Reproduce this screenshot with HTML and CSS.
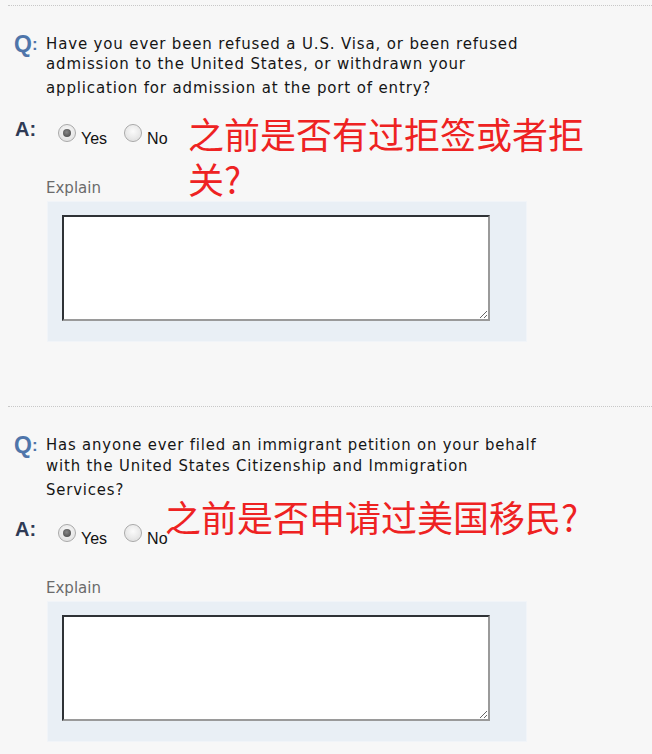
FILE: index.html
```html
<!DOCTYPE html>
<html>
<head>
<meta charset="utf-8">
<link rel="stylesheet" href="styles.css">
</head>
<body>
<div class="section">
  <div class="qrow">
    <div class="qlabel">Q<span class="colon">:</span></div>
    <div class="qtext v1">
      <span class="ln">Have you ever been refused a U.S. Visa, or been refused</span>
      <span class="ln">admission to the United States, or withdrawn your</span>
      <span class="ln last">application for admission at the port of entry?</span>
    </div>
  </div>
  <div class="arow">
    <div class="alabel">A:</div>
    <label class="opt"><input type="radio" name="q1" checked><span>Yes</span></label>
    <label class="opt"><input type="radio" name="q1"><span>No</span></label>
    <div class="note n1">之前是否有过拒签或者拒<br>关?</div>
  </div>
  <div class="explain">Explain</div>
  <div class="box"><textarea class="ta"></textarea></div>
</div>
<div class="section s2">
  <div class="qrow">
    <div class="qlabel">Q<span class="colon">:</span></div>
    <div class="qtext v2">
      <span class="ln">Has anyone ever filed an immigrant petition on your behalf</span>
      <span class="ln">with the United States Citizenship and Immigration</span>
      <span class="ln last">Services?</span>
    </div>
  </div>
  <div class="arow">
    <div class="alabel">A:</div>
    <label class="opt"><input type="radio" name="q2" checked><span>Yes</span></label>
    <label class="opt"><input type="radio" name="q2"><span>No</span></label>
    <div class="note n2">之前是否申请过美国移民?</div>
  </div>
  <div class="explain">Explain</div>
  <div class="box"><textarea class="ta"></textarea></div>
</div>
</body>
</html>
```
FILE: styles.css
```css
html, body {
  margin: 0;
  padding: 0;
  background: #f7f7f7;
}
body {
  padding-top: 5px;
  font-family: "DejaVu Sans", Verdana, sans-serif;
  overflow: hidden;
  height: 754px;
  box-sizing: border-box;
}
.section {
  margin-left: 8px;
  border-top: 1px dotted #c8c8c8;
  height: 400px;
  position: relative;
}
.s2 {
  height: 345px;
}
.qrow {
  display: flex;
  align-items: flex-start;
  margin-top: 26px;
  margin-left: 6px;
}
.qlabel {
  font-family: "Liberation Sans", Arial, sans-serif;
  font-weight: bold;
  font-size: 23px;
  line-height: 24px;
  color: #4f75aa;
  width: 32px;
  flex: none;
}
.qlabel .colon {
  font-size: 17px;
  vertical-align: 2px;
}
.qtext {
  color: #151515;
}
.qtext .ln {
  display: block;
  white-space: nowrap;
}
.v1 {
  font-size: 15px;
  letter-spacing: 0.85px;
  line-height: 20px;
  margin-top: 2px;
}
.v1 .last {
  margin-top: 4px;
}
.v2 {
  font-family: "DejaVu Sans Condensed", "DejaVu Sans", sans-serif;
  font-stretch: condensed;
  font-size: 16.5px;
  letter-spacing: 0.85px;
  line-height: 21px;
  margin-top: 1px;
}
.v2 .last {
  margin-top: 3px;
}
.arow {
  display: flex;
  align-items: flex-start;
  margin-top: 23px;
  margin-left: 7px;
  position: relative;
  height: 50px;
}
.s2 .arow {
  margin-top: 21px;
}
.alabel {
  font-family: "Liberation Sans", Arial, sans-serif;
  font-weight: bold;
  font-size: 20px;
  line-height: 20px;
  color: #2f3a55;
  width: 43px;
  flex: none;
  margin-top: -2px;
}
.opt {
  display: flex;
  align-items: flex-start;
  margin-top: 3px;
  margin-right: 17px;
  font-family: "Liberation Sans", Arial, sans-serif;
  font-size: 16px;
  color: #111;
}
.opt span {
  margin-top: 6px;
  margin-left: 5px;
}
.opt input {
  -webkit-appearance: none;
  appearance: none;
  margin: 0;
  width: 18px;
  height: 18px;
  border-radius: 50%;
  border: 1px solid #a8a8a8;
  background: radial-gradient(circle at 50% 40%, #fbfbfb 0%, #e9e9e9 55%, #d6d6d6 100%);
  box-shadow: inset 0 0 1px #fff;
  position: relative;
}
.opt input:checked::after {
  content: "";
  position: absolute;
  left: 4px;
  top: 4px;
  width: 8px;
  height: 8px;
  border-radius: 50%;
  background: radial-gradient(circle at 45% 40%, #888 0%, #555 70%);
}
.note {
  position: absolute;
  font-family: "Noto Sans CJK SC", "DejaVu Sans", sans-serif;
  color: #ee2222;
  font-size: 36px;
  line-height: 45px;
  white-space: nowrap;
}
.n1 {
  left: 173px;
  top: -10px;
}
.n2 {
  left: 150px;
  top: -27px;
}
.explain {
  margin-left: 38px;
  font-family: "DejaVu Sans", Verdana, sans-serif;
  font-size: 15px;
  line-height: 18px;
  color: #6b6b6b;
  margin-top: 8px;
}
.box {
  margin-left: 39px;
  margin-top: 4px;
  width: 480px;
  height: 141px;
  background: #e9eff5;
  border: 1px solid #f1f4f8;
  box-sizing: border-box;
  padding: 13px 0 0 14px;
}
.ta {
  display: block;
  width: 428px;
  height: 106px;
  box-sizing: border-box;
  margin: 0;
  background: #fff;
  border-style: solid;
  border-width: 2px;
  border-color: #2f3236 #9a9a9a #9a9a9a #2f3236;
  resize: both;
}
```
